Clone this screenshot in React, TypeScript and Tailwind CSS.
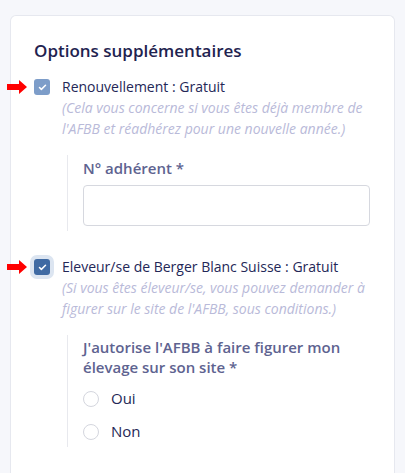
import { Check } from 'lucide-react';

function RedArrow() {
  return (
    <svg
      className="absolute -left-[27px] top-1/2 -translate-y-1/2"
      width="20"
      height="14"
      viewBox="0 0 20 14"
    >
      <path d="M0 4h12V0l8 7-8 7v-4H0z" fill="#f00" />
    </svg>
  );
}

function Checkbox({ focused }: { focused?: boolean }) {
  return (
    <span
      className={
        'relative flex h-4 w-4 shrink-0 items-center justify-center rounded-[3px] ' +
        (focused ? 'bg-[#3f6aa3] ring-4 ring-[#dce5f1]' : 'bg-[#7d9dc9]')
      }
    >
      <Check className="h-[9px] w-[9px] text-white" strokeWidth={4} />
    </span>
  );
}

function Radio({ label }: { label: string }) {
  return (
    <label className="flex items-center gap-3 text-[15px] leading-[21px] text-[#252856]">
      <span className="h-4 w-4 rounded-full border border-[#d4d6de] bg-white" />
      {label}
    </label>
  );
}

export default function App() {
  return (
    <div
      className="min-h-[473px] bg-[#f6f7fb] px-[10px] pt-[15px]"
      style={{ fontFamily: '"Open Sans", "Noto Sans", sans-serif' }}
    >
      <div className="rounded-t-md border border-b-0 border-[#e6e8ef] bg-white pl-[23px] pr-6 pt-[23px] pb-10">
        <h2 className="text-[17px] font-semibold leading-6 text-[#1f2350]">Options supplémentaires</h2>

        <div className="mt-[14px]">
          <div className="relative flex items-center gap-3 text-[14px] leading-5 text-[#242757]">
            <RedArrow />
            <Checkbox />
            Renouvellement : Gratuit
          </div>
          <p className="pl-7 text-[14px] italic leading-[21px] text-[#b9bad9]">
            (Cela vous concerne si vous êtes déjà membre de l'AFBB et réadhérez pour une nouvelle année.)
          </p>

          <div className="ml-[33px] mt-4 border-l border-[#e8e9ee] pb-[5px] pl-[15px] pt-[2px]">
            <div className="text-[15px] font-semibold leading-[22px] text-[#5e6390]">N° adhérent *</div>
            <input className="mt-[6px] block h-[41px] w-full rounded border border-[#d6d8df] bg-white outline-none" />
          </div>
        </div>

        <div className="mt-[26px]">
          <div className="relative flex items-center gap-3 text-[14px] leading-5 text-[#242757]">
            <RedArrow />
            <Checkbox focused />
            Eleveur/se de Berger Blanc Suisse : Gratuit
          </div>
          <p className="pl-7 text-[14px] italic leading-[21px] text-[#b9bad9]">
            (Si vous êtes éleveur/se, vous pouvez demander à figurer sur le site de l'AFBB, sous conditions.)
          </p>

          <div className="ml-[33px] mt-4 border-l border-[#e8e9ee] pb-[5px] pl-[15px] pt-[2px]">
            <div className="text-[15px] font-semibold leading-[20px] text-[#5e6390]">
              J'autorise l'AFBB à faire figurer mon élevage sur son site *
            </div>
            <div className="mt-[11px] flex flex-col gap-3">
              <Radio label="Oui" />
              <Radio label="Non" />
            </div>
          </div>
        </div>
      </div>
    </div>
  );
}
